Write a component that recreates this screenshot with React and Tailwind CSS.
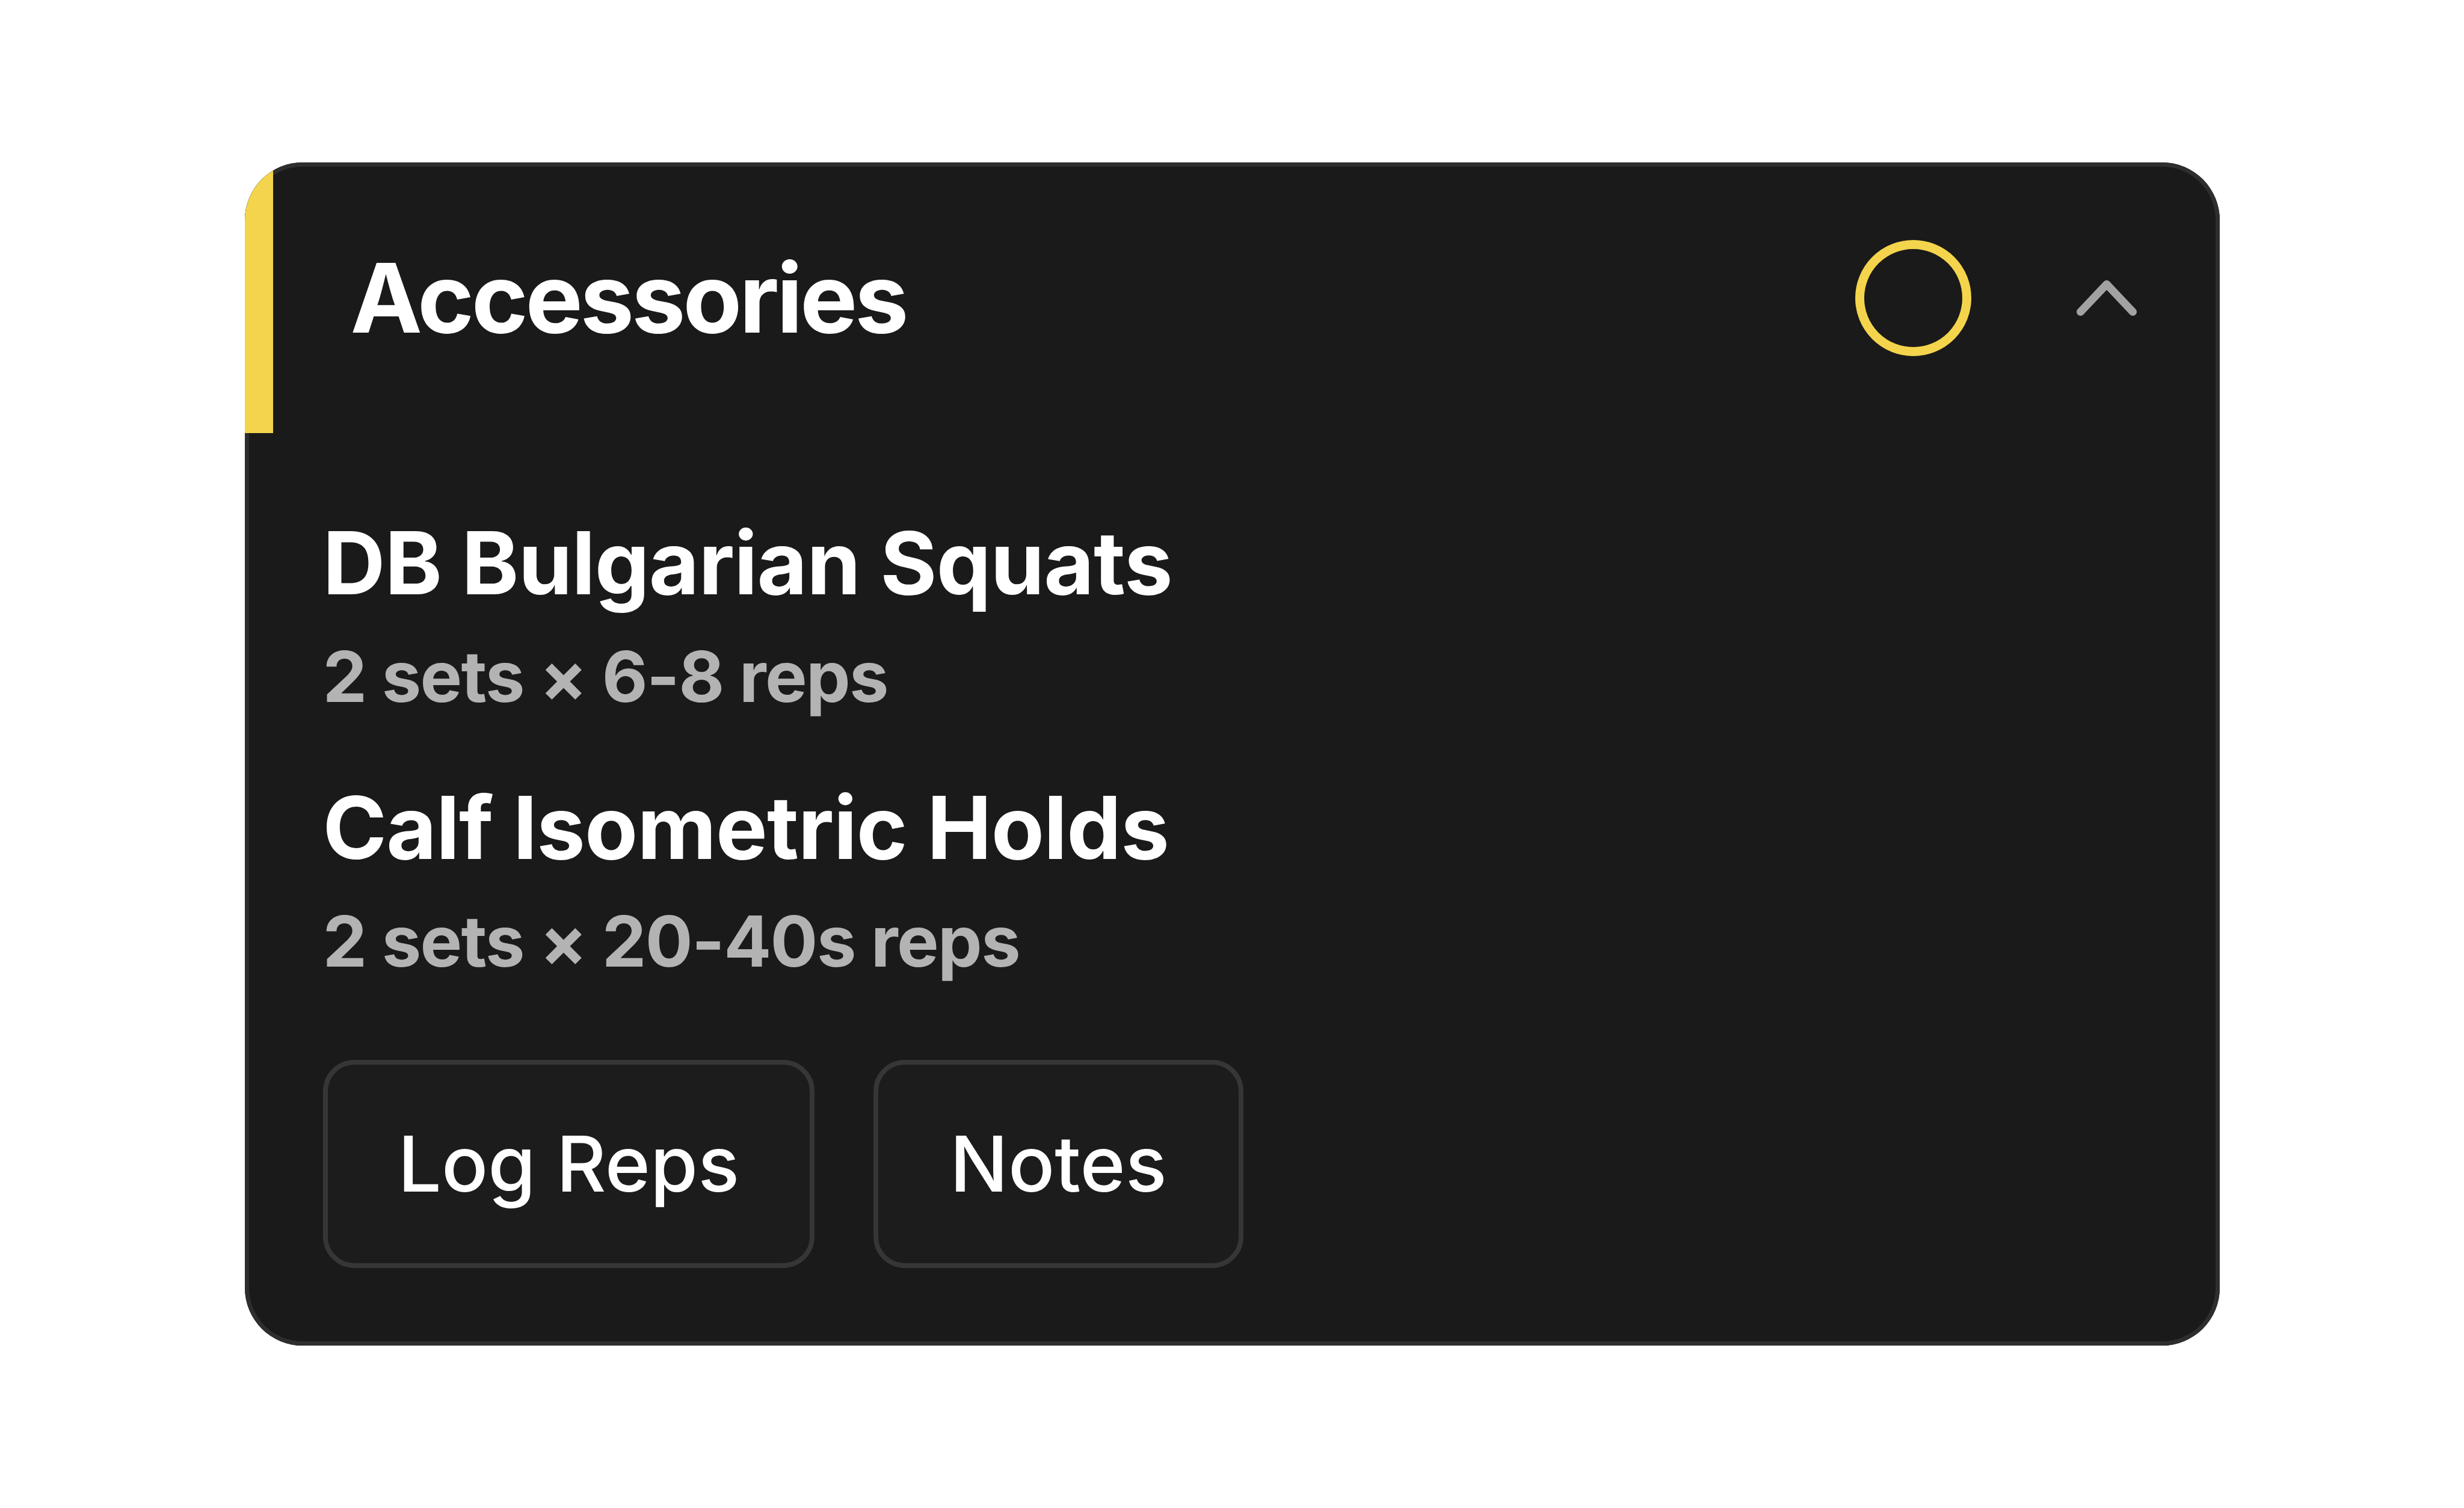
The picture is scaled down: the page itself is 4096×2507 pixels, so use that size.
import React from "react";

function Exercise({ name, detail }) {
  return (
    <div className="flex flex-col">
      <div className="text-[144px] leading-none font-bold tracking-[-0.006em] text-white">{name}</div>
      <div className="mt-[58px] text-[117px] leading-none font-bold tracking-[-0.014em] text-[#b3b3b3]">{detail}</div>
    </div>
  );
}

export default function App() {
  return (
    <div className="min-h-screen w-full bg-white flex items-center justify-center font-['Inter',sans-serif]">
      <div className="w-[3283px] rounded-[96px] bg-[#1a1a1a] overflow-hidden shadow-[inset_0_0_0_7px_#2e2e2e]">
        <div className="h-[450px] flex items-center border-l-[47px] border-[#F4D44C] pl-[129px] pr-[138px]">
          <div className="text-[160px] leading-none font-bold tracking-[-0.027em] text-white">Accessories</div>
          <div className="ml-auto w-[193px] h-[193px] rounded-full border-[15px] border-[#F4D44C]" />
          <svg className="ml-[175px]" width="100" height="59" viewBox="0 0 100 59" fill="none">
            <polyline points="6.5,52.5 50,6.5 93.5,52.5" stroke="#a2a2a2" strokeWidth="13" strokeLinecap="round" strokeLinejoin="round" />
          </svg>
        </div>
        <div className="px-[130px] pt-[144px] pb-[129px] flex flex-col">
          <div className="flex flex-col gap-[121px]">
            <Exercise name="DB Bulgarian Squats" detail="2 sets × 6-8 reps" />
            <Exercise name="Calf Isometric Holds" detail="2 sets × 20-40s reps" />
          </div>
          <div className="mt-[139px] flex gap-[98px]">
            <button className="h-[346px] px-[117px] flex items-center rounded-[52px] border-[8px] border-[#363636] bg-[#1c1c1c] text-white text-[128px] leading-none font-medium">
              Log Reps
            </button>
            <button className="h-[346px] px-[119px] flex items-center rounded-[52px] border-[8px] border-[#363636] bg-[#1c1c1c] text-white text-[128px] leading-none font-medium">
              Notes
            </button>
          </div>
        </div>
      </div>
    </div>
  );
}
